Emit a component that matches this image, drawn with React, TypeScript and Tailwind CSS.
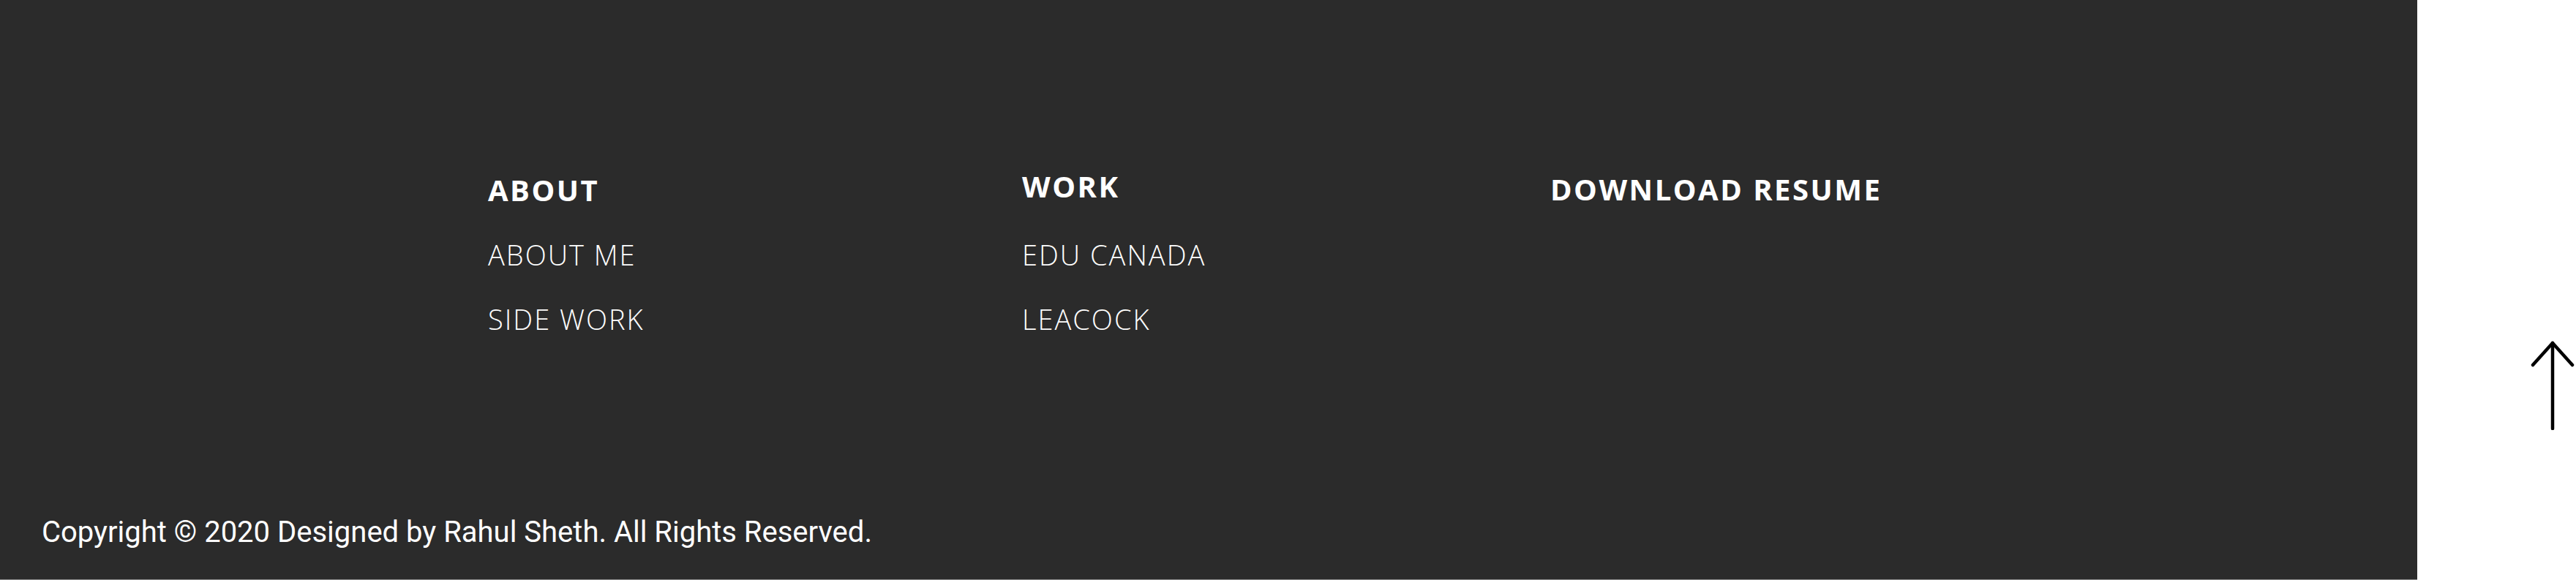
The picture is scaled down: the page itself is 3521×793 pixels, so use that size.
import { ReactNode } from 'react';

const heading = "font-['Open_Sans',sans-serif] font-bold text-[40px] leading-none text-white tracking-[2.5px]";
const link = "font-['Open_Sans',sans-serif] font-light text-[38px] leading-none text-white tracking-[2px]";

function Column({ title, offset, items, width }: { title: string; offset: string; items: string[]; width: string }) {
  return (
    <div className={`flex flex-col ${width}`}>
      <div className="h-[94px]">
        <h3 className={`${heading} ${offset}`}>{title}</h3>
      </div>
      <ul className="flex flex-col gap-[48px]">
        {items.map((item) => (
          <li key={item}>
            <a href="#" className={link}>{item}</a>
          </li>
        ))}
      </ul>
    </div>
  );
}

function ArrowUp(): ReactNode {
  return (
    <svg width="60" height="122" viewBox="0 0 60 122" fill="none" stroke="#000" strokeWidth="4.5" strokeLinecap="round" strokeLinejoin="round">
      <path d="M30 3 V120" />
      <path d="M3 33 L30 3 L57 33" />
    </svg>
  );
}

export default function App() {
  return (
    <div className="flex w-[3521px] h-[793px] bg-white">
      {/* Footer */}
      <footer className="w-[3304px] h-[793px] bg-[#2b2b2b] border-b border-[#8c8c8c] flex flex-col">
        <div className="flex pl-[667px] pt-[235px]">
          <Column title="ABOUT" offset="pt-[5px]" width="w-[730px]" items={['ABOUT ME', 'SIDE WORK']} />
          <Column title="WORK" offset="pt-0" width="w-[722px]" items={['EDU CANADA', 'LEACOCK']} />
          <Column title="DOWNLOAD RESUME" offset="pt-[4px]" width="w-[600px]" items={[]} />
        </div>
        <p className="mt-auto pl-[57px] pb-[44px] font-['Roboto',sans-serif] text-[40px] leading-none text-white">
          Copyright © 2020 Designed by Rahul Sheth. All Rights Reserved.
        </p>
      </footer>

      {/* Back to top */}
      <div className="flex-1 pl-[155px] pt-[466px]">
        <a href="#" aria-label="Back to top">
          <ArrowUp />
        </a>
      </div>
    </div>
  );
}
